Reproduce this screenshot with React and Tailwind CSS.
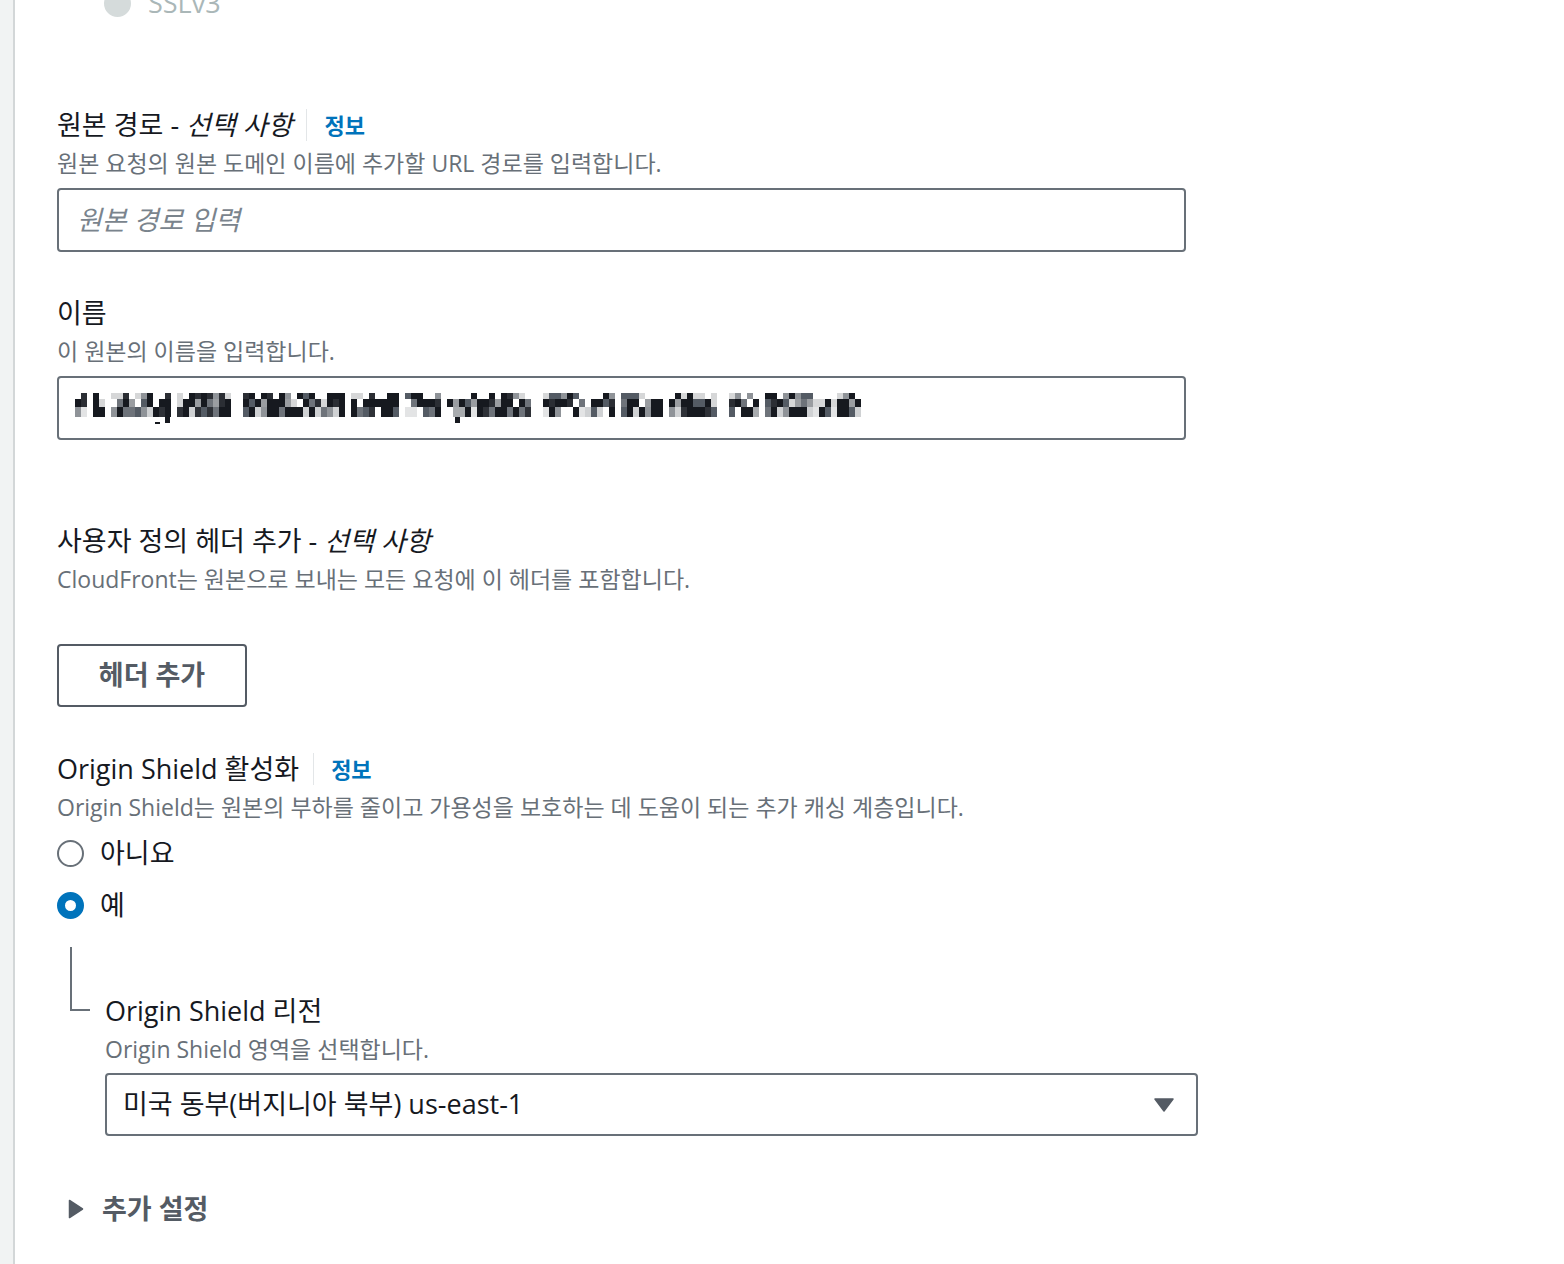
import React from "react";

function mulberry32(a) {
  return function () {
    a |= 0;
    a = (a + 0x6d2b79f5) | 0;
    let t = Math.imul(a ^ (a >>> 15), 1 | a);
    t = (t + Math.imul(t ^ (t >>> 7), 61 | t)) ^ t;
    return ((t ^ (t >>> 14)) >>> 0) / 4294967296;
  };
}

const ROW_PALETTES = [
  ["#16191f", "#16191f", "#16191f", "#2b2e34", "#545b64", "#8f9398", "#d6d7d8", null, null, null, null, null],
  ["#16191f", "#16191f", "#16191f", "#16191f", "#16191f", "#2b2e34", "#545b64", "#6e737a", "#9a9da1", "#d6d7d8", null, null],
  ["#16191f", "#16191f", "#16191f", "#16191f", "#2e3137", "#545b64", "#6e737a", "#8f9398", "#a8abae", "#cfd1d3", "#e3e4e5", null],
];

function Mosaic() {
  const rnd = mulberry32(77123);
  const cols = 131;
  const rows = [
    [0, 6],
    [6, 14],
    [14, 24],
  ];
  const gaps = new Set([2, 5, 16, 26, 27, 45, 61, 76, 77, 90, 98, 107, 108, 114]);
  const rects = [];
  for (let c = 0; c < cols; c++) {
    if (gaps.has(c)) continue;
    for (let r = 0; r < 3; r++) {
      const pal = ROW_PALETTES[r];
      const col = pal[Math.floor(rnd() * pal.length)];
      if (!col) continue;
      rects.push(<rect key={c + "-" + r} x={c * 6} y={rows[r][0]} width={6} height={rows[r][1] - rows[r][0]} fill={col} />);
    }
  }
  rects.push(<rect key="d1" x={90} y={24} width={5} height={6} fill="#16191f" />);
  rects.push(<rect key="d2" x={80} y={29} width={5} height={2} fill="#16191f" />);
  rects.push(<rect key="d3" x={380} y={24} width={5} height={6} fill="#16191f" />);
  return (
    <svg width={790} height={32} viewBox="0 0 790 32" className="block">
      {rects}
    </svg>
  );
}

function Info() {
  return (
    <>
      <span className="ml-[14px] mr-[17px] inline-block h-[32px] w-px bg-[#e3e6e8]" />
      <span className="text-[22px] font-bold text-[#0073bb]">정보</span>
    </>
  );
}

function Radio({ checked, label }) {
  return (
    <div className="flex h-[40px] items-center">
      {checked ? (
        <span className="box-border h-[27px] w-[27px] rounded-full border-[8px] border-[#0073bb] bg-white" />
      ) : (
        <span className="box-border h-[27px] w-[27px] rounded-full border-[2px] border-[#687078] bg-white" />
      )}
      <span className="ml-[16px] text-[27px] text-[#16191f]">{label}</span>
    </div>
  );
}

export default function App() {
  return (
    <div className="flex h-[1264px] w-[1564px] overflow-hidden bg-white font-['Open_Sans','Noto_Sans_CJK_KR',sans-serif]">
      <div className="h-full w-[15px] shrink-0 border-r-[2px] border-[#d3d7d8] bg-[#f1f3f3]" />
      <div className="flex flex-1 flex-col pl-[42px]">
        {/* SSLv3 disabled radio (scrolled off) */}
        <div className="-mt-[17px] flex h-[40px] items-center pl-[47px]">
          <span className="h-[27px] w-[27px] rounded-full bg-[#d5dbdb]" />
          <span className="ml-[17px] text-[27px] text-[#aab7b8]">SSLv3</span>
        </div>

        {/* 원본 경로 */}
        <div className="mt-[84px] flex h-[36px] items-center text-[27px] text-[#16191f]">
          <span>
            원본 경로 - <i>선택 사항</i>
          </span>
          <Info />
        </div>
        <div className="mt-[5px] text-[23px] leading-[30px] text-[#687078]">원본 요청의 원본 도메인 이름에 추가할 URL 경로를 입력합니다.</div>
        <div className="mt-[10px] flex h-[64px] w-[1129px] items-center rounded-[4px] border-[2px] border-[#687078] px-[18px]">
          <span className="text-[27px] italic text-[#7a848d]">원본 경로 입력</span>
        </div>

        {/* 이름 */}
        <div className="mt-[43px] flex h-[36px] items-center text-[27px] text-[#16191f]">이름</div>
        <div className="mt-[5px] text-[23px] leading-[30px] text-[#687078]">이 원본의 이름을 입력합니다.</div>
        <div className="mt-[10px] h-[64px] w-[1129px] rounded-[4px] border-[2px] border-[#687078] pl-[16px] pt-[15px]">
          <Mosaic />
        </div>

        {/* 사용자 정의 헤더 */}
        <div className="mt-[83px] flex h-[36px] items-center text-[27px] text-[#16191f]">
          <span>
            사용자 정의 헤더 추가 - <i>선택 사항</i>
          </span>
        </div>
        <div className="mt-[5px] text-[23px] leading-[30px] text-[#687078]">CloudFront는 원본으로 보내는 모든 요청에 이 헤더를 포함합니다.</div>
        <div className="mt-[50px] flex">
          <button className="flex h-[63px] w-[190px] items-center justify-center rounded-[4px] border-[2px] border-[#545b64] bg-white text-[27px] font-bold text-[#545b64]">
            헤더 추가
          </button>
        </div>

        {/* Origin Shield */}
        <div className="mt-[44px] flex h-[36px] items-center text-[27px] text-[#16191f]">
          <span>Origin Shield 활성화</span>
          <Info />
        </div>
        <div className="mt-[5px] text-[23px] leading-[30px] text-[#687078]">Origin Shield는 원본의 부하를 줄이고 가용성을 보호하는 데 도움이 되는 추가 캐싱 계층입니다.</div>
        <div className="mt-[11px]">
          <Radio label="아니요" />
        </div>
        <div className="mt-[12px]">
          <Radio checked label="예" />
        </div>

        {/* nested region */}
        <div className="mt-[22px] flex">
          <div className="ml-[13px] h-[64px] w-[20px] border-b-[2px] border-l-[2px] border-[#687078]" />
          <div className="ml-[15px] flex flex-col">
            <div className="mt-[46px] flex h-[36px] items-center text-[27px] text-[#16191f]">Origin Shield 리전</div>
            <div className="mt-[5px] text-[23px] leading-[30px] text-[#687078]">Origin Shield 영역을 선택합니다.</div>
            <div className="mt-[9px] flex h-[63px] w-[1093px] items-center justify-between rounded-[4px] border-[2px] border-[#687078] pl-[16px] pr-[22px]">
              <span className="text-[27px] text-[#16191f]">미국 동부(버지니아 북부) us-east-1</span>
              <svg width="20" height="14" viewBox="0 0 20 14">
                <path d="M1 1 L19 1 L10 13 Z" fill="#545b64" stroke="#545b64" strokeWidth="1.5" strokeLinejoin="round" />
              </svg>
            </div>
          </div>
        </div>

        {/* 추가 설정 */}
        <div className="mt-[55px] flex h-[36px] items-center">
          <svg width="16" height="20" viewBox="0 0 16 20" className="ml-[11px]">
            <path d="M1.5 1.5 L14.5 10 L1.5 18.5 Z" fill="#545b64" stroke="#545b64" strokeWidth="1.5" strokeLinejoin="round" />
          </svg>
          <span className="ml-[18px] text-[27px] font-bold text-[#545b64]">추가 설정</span>
        </div>
      </div>
    </div>
  );
}
